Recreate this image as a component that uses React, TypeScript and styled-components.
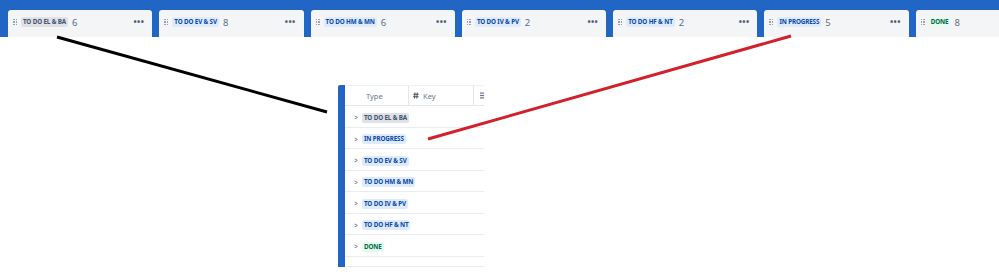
import styled, { createGlobalStyle } from "styled-components";

const GlobalStyle = createGlobalStyle`
  html, body {
    margin: 0;
    padding: 0;
    background: #fff;
    overflow: hidden;
  }
  body {
    font-family: "Noto Sans", "Open Sans", Arial, sans-serif;
    width: 999px;
    height: 274px;
  }
`;

type Tone = "gray" | "blue" | "green";

const columns: { name: string; count: number; tone: Tone }[] = [
  { name: "TO DO EL & BA", count: 6, tone: "gray" },
  { name: "TO DO EV & SV", count: 8, tone: "blue" },
  { name: "TO DO HM & MN", count: 6, tone: "blue" },
  { name: "TO DO IV & PV", count: 2, tone: "blue" },
  { name: "TO DO HF & NT", count: 2, tone: "blue" },
  { name: "IN PROGRESS", count: 5, tone: "blue" },
  { name: "DONE", count: 8, tone: "green" },
];

const tableRows: { name: string; tone: Tone }[] = [
  { name: "TO DO EL & BA", tone: "gray" },
  { name: "IN PROGRESS", tone: "blue" },
  { name: "TO DO EV & SV", tone: "blue" },
  { name: "TO DO HM & MN", tone: "blue" },
  { name: "TO DO IV & PV", tone: "blue" },
  { name: "TO DO HF & NT", tone: "blue" },
  { name: "DONE", tone: "green" },
];

const toneColors: Record<Tone, { bg: string; fg: string }> = {
  gray: { bg: "#dfe1e6", fg: "#42526e" },
  blue: { bg: "#deebff", fg: "#0747a6" },
  green: { bg: "#e3fcef", fg: "#006644" },
};

const Page = styled.div`
  position: relative;
  width: 999px;
  height: 274px;
  overflow: hidden;
`;

const BoardStrip = styled.div`
  display: flex;
  gap: 7px;
  height: 37px;
  padding: 10px 0 0 8px;
  box-sizing: border-box;
  background: #2166c5;
  overflow: hidden;
`;

const ColumnHeader = styled.div`
  flex: 0 0 144.3px;
  display: flex;
  align-items: center;
  height: 27px;
  padding: 0 8px 3px 5px;
  box-sizing: border-box;
  background: #f4f5f7;
  border-radius: 3px 3px 0 0;
`;

const Handle = styled.span`
  display: grid;
  grid-template-columns: repeat(2, 1.5px);
  grid-auto-rows: 1.5px;
  gap: 1px;
  margin-right: 4px;
  & > i {
    display: block;
    background: #97a0af;
  }
`;

const Lozenge = styled.span<{ $tone: Tone }>`
  display: inline-block;
  padding: 1px 2px;
  border-radius: 2px;
  font-size: 6.3px;
  line-height: 8px;
  font-weight: 700;
  letter-spacing: -0.15px;
  white-space: nowrap;
  background: ${(p) => toneColors[p.$tone].bg};
  color: ${(p) => toneColors[p.$tone].fg};
`;

const Count = styled.span`
  margin-left: 4px;
  font-size: 9.5px;
  color: #5e6c84;
`;

const More = styled.span`
  margin-left: auto;
  font-size: 8.5px;
  font-weight: 700;
  letter-spacing: 0.4px;
  color: #505f79;
  line-height: 1;
`;

const Lines = styled.svg`
  position: absolute;
  left: 0;
  top: 0;
  pointer-events: none;
`;

const TableArea = styled.div`
  padding: 48px 0 0 338px;
`;

const Panel = styled.div`
  display: flex;
  width: 146px;
  overflow: hidden;
`;

const AccentBar = styled.div`
  flex: 0 0 7px;
  background: #2166c5;
  border-radius: 2px 0 0 0;
`;

const Table = styled.div`
  flex: 1;
  min-width: 0;
`;

const HeaderRow = styled.div`
  display: flex;
  height: 21px;
  border-top: 1px solid #f0f1f3;
  border-bottom: 1px solid #e4e6ea;
  box-sizing: border-box;
  font-size: 7.5px;
  color: #6b778c;
`;

const HeaderCell = styled.div<{ $w: number }>`
  flex: 0 0 ${(p) => p.$w}px;
  display: flex;
  align-items: center;
  gap: 4px;
  padding-left: ${(p) => (p.$w > 40 ? 4 : 6)}px;
  box-sizing: border-box;
  border-right: 1px solid #e4e6ea;
  &:first-child {
    padding-left: 21px;
  }
`;

const Row = styled.div<{ $h?: number }>`
  display: flex;
  align-items: center;
  height: ${(p) => p.$h ?? 21.5}px;
  padding: ${(p) => (p.$h ? 0 : 3)}px 0 0 9px;
  box-sizing: border-box;
  border-bottom: 1px solid #ebecf0;
`;

const Chevron = styled.span`
  font-size: 7px;
  color: #42526e;
  margin-right: 4px;
  transform: scaleX(0.8);
`;

function DragHandle() {
  return (
    <Handle>
      {Array.from({ length: 6 }).map((_, i) => (
        <i key={i} />
      ))}
    </Handle>
  );
}

export default function App() {
  return (
    <>
      <GlobalStyle />
      <Page>
        <BoardStrip>
          {columns.map((c) => (
            <ColumnHeader key={c.name}>
              <DragHandle />
              <Lozenge $tone={c.tone}>{c.name}</Lozenge>
              <Count>{c.count}</Count>
              {c.name !== "DONE" && <More>•••</More>}
            </ColumnHeader>
          ))}
        </BoardStrip>

        <TableArea>
          <Panel>
            <AccentBar />
            <Table>
              <HeaderRow>
                <HeaderCell $w={64}>Type</HeaderCell>
                <HeaderCell $w={65}>
                  <svg width="6" height="7" viewBox="0 0 6 7">
                    <path
                      d="M2 0.5 L1.5 6.5 M4.3 0.5 L3.8 6.5 M0.3 2.3 H5.7 M0.2 4.7 H5.5"
                      stroke="#42526e"
                      strokeWidth="1"
                      fill="none"
                    />
                  </svg>
                  Key
                </HeaderCell>
                <HeaderCell $w={30}>
                  <svg width="5" height="7" viewBox="0 0 5 7">
                    <rect x="0" y="0.5" width="5" height="1.2" fill="#6b778c" />
                    <rect x="0" y="2.9" width="5" height="1.2" fill="#6b778c" />
                    <rect x="0" y="5.3" width="5" height="1.2" fill="#6b778c" />
                  </svg>
                </HeaderCell>
              </HeaderRow>
              {tableRows.map((r) => (
                <Row key={r.name}>
                  <Chevron>&gt;</Chevron>
                  <Lozenge $tone={r.tone}>{r.name}</Lozenge>
                </Row>
              ))}
              <Row $h={10} />
            </Table>
          </Panel>
        </TableArea>

        <Lines width="999" height="274">
          <line x1="57" y1="37" x2="327" y2="112" stroke="#000" strokeWidth="3" />
          <line x1="791" y1="36" x2="428" y2="139" stroke="#d3202a" strokeWidth="3" />
        </Lines>
      </Page>
    </>
  );
}
